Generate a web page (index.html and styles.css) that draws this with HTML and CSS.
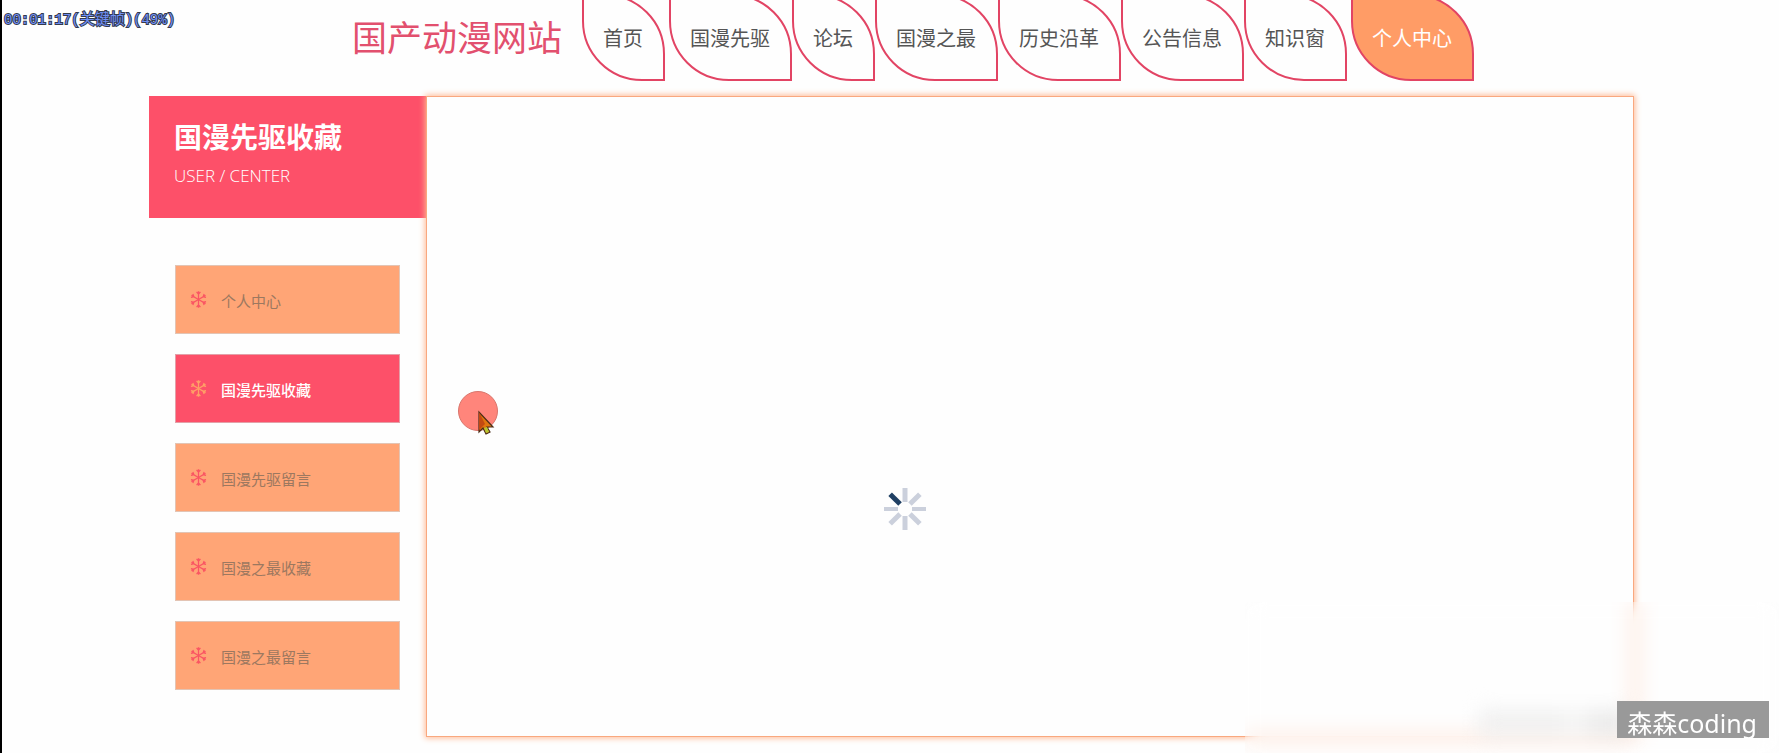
FILE: index.html
```html
<!DOCTYPE html>
<html lang="zh-CN">
<head>
<meta charset="utf-8">
<title>国产动漫网站</title>
<link rel="stylesheet" href="styles.css">
</head>
<body>
<svg class="symbols" aria-hidden="true">
  <symbol id="flake" viewBox="0 0 16 16">
    <g fill="none" stroke="currentColor" stroke-width="1.2">
      <path id="arm" d="M8 8V0.3M6.2 0.8L8 3L9.8 0.8"/>
      <use href="#arm" transform="rotate(60 8 8)"/>
      <use href="#arm" transform="rotate(120 8 8)"/>
      <use href="#arm" transform="rotate(180 8 8)"/>
      <use href="#arm" transform="rotate(240 8 8)"/>
      <use href="#arm" transform="rotate(300 8 8)"/>
    </g>
  </symbol>
</svg>
<div class="page">
  <header class="top">
    <h1 class="logo">国产动漫网站</h1>
    <nav class="nav">
      <a href="#">首页</a>
      <a href="#">国漫先驱</a>
      <a href="#">论坛</a>
      <a href="#">国漫之最</a>
      <a href="#">历史沿革</a>
      <a href="#">公告信息</a>
      <a href="#">知识窗</a>
      <a href="#" class="current">个人中心</a>
    </nav>
  </header>
  <main class="content">
    <aside class="side">
      <div class="side-head">
        <h2>国漫先驱收藏</h2>
        <p>USER / CENTER</p>
      </div>
      <nav class="menu">
        <a href="#"><svg class="flake"><use href="#flake"/></svg><span>个人中心</span></a>
        <a href="#" class="active"><svg class="flake"><use href="#flake"/></svg><span>国漫先驱收藏</span></a>
        <a href="#"><svg class="flake"><use href="#flake"/></svg><span>国漫先驱留言</span></a>
        <a href="#"><svg class="flake"><use href="#flake"/></svg><span>国漫之最收藏</span></a>
        <a href="#"><svg class="flake"><use href="#flake"/></svg><span>国漫之最留言</span></a>
      </nav>
    </aside>
    <section class="panel"></section>
  </main>
  <svg class="spinner" viewBox="-22 -22 44 44" role="img" aria-label="loading">
    <g fill="#cbd0dc">
      <rect x="-2.5" y="-21" width="5" height="14"/>
      <rect x="-2.5" y="-21" width="5" height="14" transform="rotate(45)"/>
      <rect x="-2" y="-21" width="4" height="14" transform="rotate(90)"/>
      <rect x="-2.5" y="-21" width="5" height="14" transform="rotate(135)"/>
      <rect x="-2.5" y="-21" width="5" height="14" transform="rotate(180)"/>
      <rect x="-2.5" y="-21" width="5" height="14" transform="rotate(225)"/>
      <rect x="-2" y="-21" width="4" height="14" transform="rotate(270)"/>
      <rect x="-2.5" y="-21" width="5" height="14" transform="rotate(315)" fill="#1f3f63"/>
    </g>
  </svg>
  <svg class="pointer" viewBox="0 0 48 48" aria-hidden="true">
    <circle cx="21" cy="21" r="19.5" fill="#ff857b" stroke="#d9766c" stroke-width="1"/>
    <path d="M22 22V42L26 38L29 44L33 42L30 37H36Z" fill="#e0760f" stroke="#4a2d18" stroke-width="1.2"/>
    <path d="M22 22V40L28 34Z" fill="#c34a12"/>
    <path d="M27 38L29 43L32 42L30 37Z" fill="#b5c832"/>
  </svg>
  <div class="haze"></div>
  <div class="smudge"></div>
  <div class="watermark">森森coding</div>
  <div class="timecode">00:01:17(<span>关键帧</span>)(49%)</div>
</div>
</body>
</html>
```
FILE: styles.css
```css
* { box-sizing: border-box; }
body {
  margin: 0;
  background: #fefefe;
  font-family: "Noto Sans", "Noto Sans CJK SC", sans-serif;
}
h1, h2, p { margin: 0; font-weight: 400; }
a { text-decoration: none; }
.symbols { position: absolute; width: 0; height: 0; }
.page {
  position: relative;
  min-height: 100vh;
  overflow: hidden;
  border-left: 2px solid #000;
}
.top {
  display: flex;
  justify-content: center;
  gap: 20px;
  height: 96px;
  padding-left: 45px;
}
.logo {
  font-family: "Noto Sans CJK SC", sans-serif;
  font-weight: 400;
  font-size: 35px;
  line-height: 71px;
  color: #e2506e;
  white-space: nowrap;
}
.nav {
  display: flex;
  margin-top: -6px;
}
.nav a {
  height: 87px;
  padding: 0 20px 0 19px;
  border: 2px solid #e24464;
  border-radius: 0 60px;
  font-family: "Noto Sans CJK SC", sans-serif;
  font-weight: 400;
  font-size: 20px;
  line-height: 83px;
  color: #555;
  white-space: nowrap;
}
.nav a:first-child { margin-right: 4px; }
.nav .current {
  margin-left: 4px;
  background: #ff9c66;
  color: #fff;
}
.content {
  display: flex;
  min-height: 641px;
  padding: 0 145px 0 147px;
}
.side { flex: 0 0 277px; }
.side-head {
  height: 122px;
  padding: 19px 25px;
  background: #fd5069;
  color: #fff;
}
.side-head h2 {
  font-family: "Noto Sans CJK SC", sans-serif;
  font-weight: 700;
  font-size: 28px;
  line-height: 42px;
}
.side-head p {
  font-family: "Open Sans", sans-serif;
  font-weight: 300;
  font-size: 17px;
  line-height: 38px;
}
.menu {
  display: flex;
  flex-direction: column;
  gap: 20px;
  padding: 47px 26px;
}
.menu a {
  display: flex;
  align-items: center;
  gap: 14px;
  height: 69px;
  padding: 0 14px;
  border: 1px solid #e3c4b4;
  background: #ffa576;
  color: #9c7860;
  font-family: "Noto Sans CJK SC", sans-serif;
  font-weight: 400;
  font-size: 15px;
}
.menu span { padding-top: 1px; }
.menu .active {
  background: #fd5069;
  border-color: #e3a0a8;
  color: #fff;
  font-weight: 500;
}
.flake {
  width: 17px;
  height: 17px;
  color: #fa5563;
}
.active .flake { color: #ffa066; }
.panel {
  flex: 1;
  border: 1px solid #f9a87f;
  background: #fefefe;
  box-shadow: 0 0 6px 1px #ffb893;
}
.spinner {
  position: absolute;
  left: calc(50% - 8px);
  top: 487px;
  width: 44px;
  height: 44px;
}
.pointer {
  position: absolute;
  left: 455px;
  top: 390px;
  width: 48px;
  height: 48px;
}
.haze {
  position: absolute;
  right: 0;
  bottom: 0;
  width: 534px;
  height: 151px;
  backdrop-filter: blur(10px);
}
.smudge {
  position: absolute;
  right: 150px;
  bottom: 18px;
  width: 150px;
  height: 24px;
  background: linear-gradient(90deg, #efefef 0 55%, #f8f8f8 65%, #e9e9e9 75%);
  filter: blur(10px);
}
.watermark {
  position: absolute;
  right: 10px;
  bottom: 15px;
  height: 37px;
  padding: 0 12px 0 10px;
  background: #999;
  color: #fff;
  font-size: 25px;
  line-height: 44px;
  white-space: nowrap;
}
.timecode {
  position: absolute;
  left: 2px;
  top: 10px;
  color: #6f8ff5;
  font-family: "Liberation Mono", monospace;
  font-weight: 400;
  font-size: 14px;
  line-height: 20px;
  white-space: nowrap;
  -webkit-text-stroke: 2px #333a4c;
  paint-order: stroke fill;
}
.timecode span {
  font-family: "Noto Sans CJK SC", sans-serif;
  font-size: 15px;
  line-height: 16px;
}
```
